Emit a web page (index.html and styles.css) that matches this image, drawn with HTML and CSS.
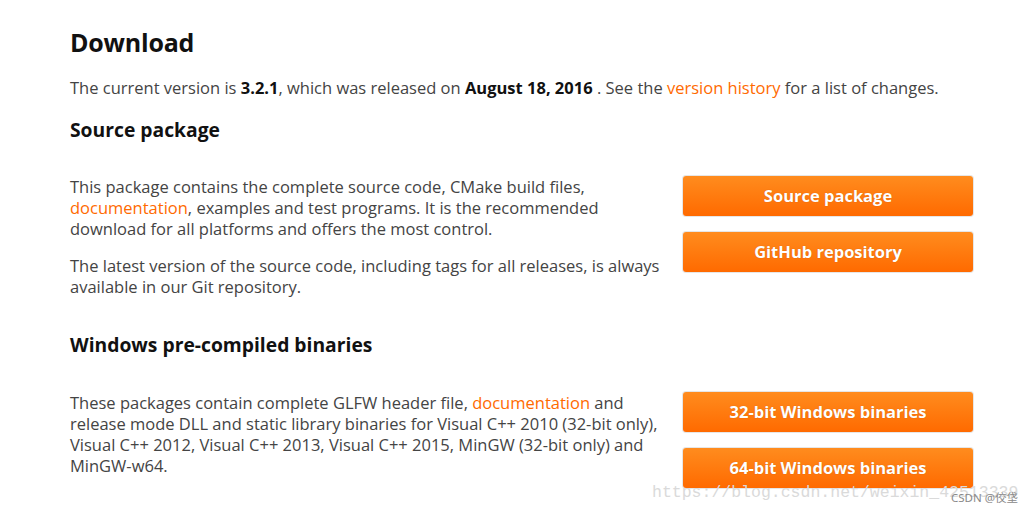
FILE: index.html
```html
<!DOCTYPE html>
<html>
<head>
<meta charset="utf-8">
<link rel="stylesheet" href="styles.css">
</head>
<body>
<div class="page">
  <h1 class="title">Download</h1>
  <p class="intro">The current version is <b>3.2.1</b>, which was released on <b>August 18, 2016</b> . See the <a href="#">version history</a> for a list of changes.</p>

  <h2 class="section">Source package</h2>
  <div class="row">
    <div class="text">
      <p>This package contains the complete source code, CMake build files, <a href="#">documentation</a>, examples and test programs. It is the recommended download for all platforms and offers the most control.</p>
      <p>The latest version of the source code, including tags for all releases, is always available in our Git repository.</p>
    </div>
    <div class="buttons">
      <a class="btn" href="#">Source package</a>
      <a class="btn" href="#">GitHub repository</a>
    </div>
  </div>

  <h2 class="section sec2">Windows pre-compiled binaries</h2>
  <div class="row row2">
    <div class="text">
      <p>These packages contain complete GLFW header file, <a href="#">documentation</a> and release mode DLL and static library binaries for Visual C++ 2010 (32-bit only), Visual C++ 2012, Visual C++ 2013, Visual C++ 2015, MinGW (32-bit only) and MinGW-w64.</p>
    </div>
    <div class="buttons">
      <a class="btn" href="#">32-bit Windows binaries</a>
      <a class="btn" href="#">64-bit Windows binaries</a>
    </div>
  </div>
</div>
<div class="wm-url">https://blog.csdn.net/weixin_42513339</div>
<div class="wm-csdn">CSDN @佼垡</div>
</body>
</html>
```
FILE: styles.css
```css
html, body {
  margin: 0;
  padding: 0;
  background: #fff;
  width: 1034px;
  height: 514px;
  overflow: hidden;
  position: relative;
}
body {
  font-family: "Open Sans", "Noto Sans", sans-serif;
  font-size: 16.5px;
  line-height: 21px;
  color: #444;
}
.page {
  padding: 26px 0 0 70px;
  width: 903px;
}
.title {
  margin: 0;
  font-size: 25px;
  line-height: 32px;
  font-weight: 700;
  color: #111;
  letter-spacing: -0.2px;
}
.intro {
  margin: 19px 0 0;
}
b {
  color: #111;
  font-weight: 700;
}
a {
  color: #ff6a00;
  text-decoration: none;
}
.section {
  margin: 19px 0 0;
  font-size: 19.3px;
  line-height: 26px;
  font-weight: 700;
  color: #111;
}
.sec2 {
  margin-top: 19px;
}
.row {
  display: flex;
  justify-content: space-between;
  margin-top: 33px;
}
.row2 {
  margin-top: 34px;
}
.text {
  width: 603px;
}
.text p {
  margin: 0 0 16px;
}
.text p:first-child {
  margin-top: 0;
}
.buttons {
  width: 290px;
  display: flex;
  flex-direction: column;
  gap: 16px;
}
.btn {
  display: block;
  height: 40px;
  line-height: 40px;
  text-align: center;
  color: #fff;
  font-weight: 700;
  font-size: 16.5px;
  border-radius: 3px;
  background: linear-gradient(#ff8c1e, #ff6a00);
  box-shadow: 0 0 0 1px #e6e6e6;
  text-shadow: 0 0 1px rgba(120, 50, 0, 0.4);
}
.wm-url {
  position: absolute;
  left: 652px;
  top: 483px;
  font-family: "Liberation Mono", monospace;
  font-size: 16.5px;
  line-height: 20px;
  color: #dadada;
  white-space: nowrap;
}
.wm-csdn {
  position: absolute;
  left: 951px;
  top: 491px;
  font-family: "Noto Sans", "Noto Sans CJK SC", sans-serif;
  font-size: 11.5px;
  line-height: 14px;
  color: #888;
  white-space: nowrap;
}
```
